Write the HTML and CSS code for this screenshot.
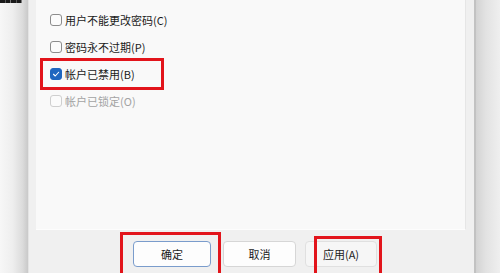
FILE: index.html
```html
<!DOCTYPE html>
<html lang="zh-CN">
<head>
<meta charset="utf-8">
<title>帐户属性</title>
<link rel="stylesheet" href="styles.css">
</head>
<body>
  <div class="backdrop-left">
    <div class="glyph-edge"></div>
  </div>
  <div class="window">
    <div class="panel">
      <label class="row">
        <span class="box"></span>
        <span class="label">用户不能更改密码(C)</span>
      </label>
      <label class="row">
        <span class="box"></span>
        <span class="label">密码永不过期(P)</span>
      </label>
      <label class="row">
        <span class="box checked">
          <svg viewBox="0 0 12 12" width="12" height="12"><polyline points="3,6.3 5.1,8.4 9.2,3.9" fill="none" stroke="#ffffff" stroke-width="1.3" stroke-linecap="round" stroke-linejoin="round"/></svg>
        </span>
        <span class="label">帐户已禁用(B)</span>
      </label>
      <label class="row disabled">
        <span class="box"></span>
        <span class="label">帐户已锁定(O)</span>
      </label>
    </div>
    <div class="buttons">
      <button class="btn primary">确定</button>
      <button class="btn cancel">取消</button>
      <button class="btn apply">应用(A)</button>
    </div>
    <div class="mark mark-check"></div>
    <div class="mark mark-ok"></div>
    <div class="mark mark-apply"></div>
  </div>
  <div class="backdrop-right"></div>
</body>
</html>
```

FILE: styles.css
```css
* { box-sizing: border-box; }

html, body {
  margin: 0;
  padding: 0;
}

body {
  width: 500px;
  height: 273px;
  overflow: hidden;
  display: flex;
  font-family: "Noto Sans CJK SC", "Noto Sans", sans-serif;
  font-size: 11px;
  color: #1b1b1b;
  background: #f2f2f2;
}

.backdrop-left {
  width: 28px;
  flex: none;
  height: 273px;
  overflow: hidden;
  background: linear-gradient(to right, #f7f7f7 0%, #eeeeee 45%, #dcdcdc 80%, #c9c9c9 100%);
}

/* bottom edge of a line of text that lies above the visible area */
.glyph-edge {
  width: 22px;
  height: 3px;
  background: repeating-linear-gradient(to right, #1a1a1a 0 5px, #555 5px 6px, #1a1a1a 6px 10px, #777 10px 11px);
}

.window {
  position: relative;
  width: 448px;
  flex: none;
  height: 273px;
  background: #f0f0f0;
  border-left: 1px solid #e4e4e4;
  border-right: 2px solid #c2c2c2;
  padding: 0 8px 0 7px;
  display: flex;
  flex-direction: column;
}

.panel {
  height: 230px;
  background: #f9f9f9;
  border-right: 1px solid #e6e6e6;
  border-bottom: 1px solid #fdfdfd;
  padding: 13px 0 0 14px;
  display: flex;
  flex-direction: column;
  gap: 13px;
}

.row {
  display: flex;
  align-items: center;
  gap: 3px;
  height: 14px;
  white-space: nowrap;
}

.box {
  width: 12px;
  height: 12px;
  border: 1px solid #8c8c8c;
  border-radius: 3px;
  background: #fbfbfb;
  display: flex;
  align-items: center;
  justify-content: center;
}

.box svg { display: block; }

.box.checked {
  background: #1f67c0;
  border-color: #1f67c0;
}

.row.disabled .box {
  border-color: #cfcfcf;
}

.row.disabled .label {
  color: #a3a3a3;
}

.buttons {
  display: flex;
  padding: 11px 0 0 97px;
}

.btn {
  height: 26px;
  font-family: "Noto Sans CJK SC", "Noto Sans", sans-serif;
  font-size: 11px;
  color: #1b1b1b;
  background: #fdfdfd;
  border: 1px solid #d6d6d6;
  border-radius: 4px;
  padding: 0;
  flex: none;
}

.btn.primary {
  width: 78px;
  border: 1.5px solid #7a9ccc;
}

.btn.cancel {
  width: 73px;
  margin-left: 12px;
}

.btn.apply {
  width: 72px;
  margin-left: 9px;
  border-color: #e0e0e0;
  background: #f6f6f6;
}

.backdrop-right {
  flex: 1;
  height: 273px;
  background: linear-gradient(to right, #d3d3d3 0%, #e2e2e2 40%, #efefef 100%);
}

/* red annotation frames drawn over the dialog */
.mark {
  position: absolute;
  border: 3px solid #e2141b;
}

.mark-check {
  left: 11px;
  top: 58px;
  width: 124px;
  height: 32px;
}

.mark-ok {
  left: 91px;
  top: 232px;
  width: 101px;
  height: 50px;
}

.mark-apply {
  left: 285px;
  top: 236px;
  width: 68px;
  height: 50px;
}
```
